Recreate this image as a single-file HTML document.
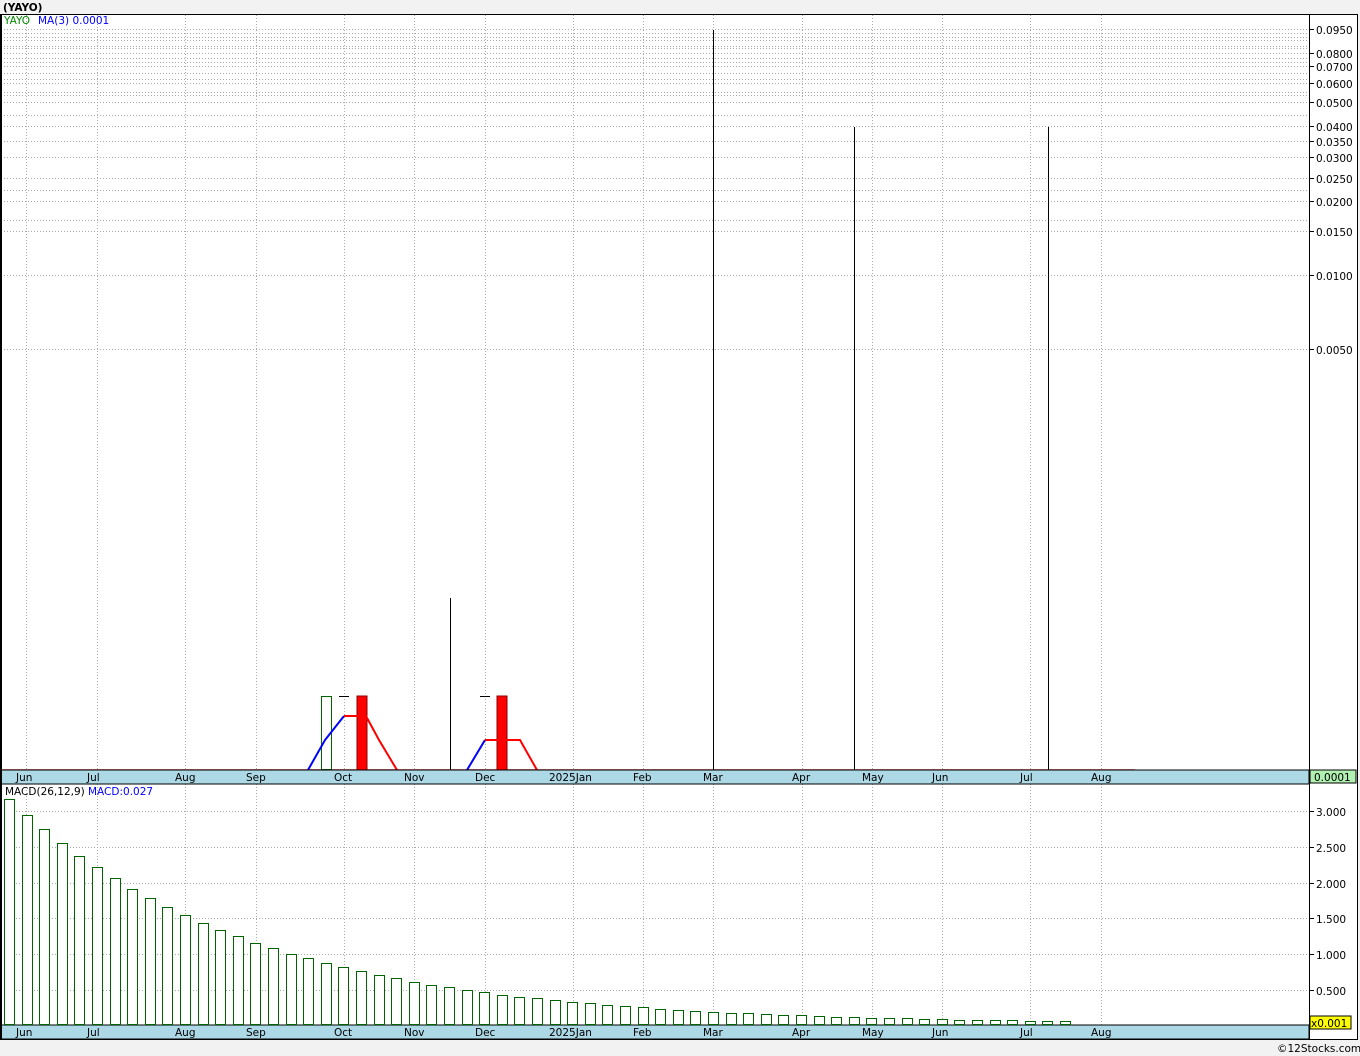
<!DOCTYPE html>
<html><head><meta charset="utf-8"><style>
html,body{margin:0;padding:0;background:#f2f2f2;width:1360px;height:1056px;overflow:hidden}
svg{display:block}
text{font-family:"DejaVu Sans","Liberation Sans",sans-serif;font-size:10.5px}
</style></head><body>
<svg id="s" width="1360" height="1056" xmlns="http://www.w3.org/2000/svg" shape-rendering="crispEdges">
<text x="3" y="11" font-weight="bold" font-size="12" fill="#000">(YAYO)</text>
<rect x="0" y="14" width="1358" height="1026" fill="#fff"/>
<g id="grid" stroke="#aaa" stroke-dasharray="1,2" stroke-width="1"></g>
<line x1="0" y1="769.5" x2="1135" y2="769.5" stroke="#e88" stroke-width="1.5"/>
<g stroke="#000" stroke-width="1">
<line x1="713.5" y1="30" x2="713.5" y2="770"/>
<line x1="854.5" y1="127" x2="854.5" y2="770"/>
<line x1="1048.5" y1="127" x2="1048.5" y2="770"/>
<line x1="450.5" y1="598" x2="450.5" y2="770"/>
<line x1="339" y1="696.5" x2="349" y2="696.5"/>
<line x1="480" y1="696.5" x2="490" y2="696.5"/>
</g>
<rect x="321.5" y="696.5" width="10" height="73" fill="#fff" stroke="#060"/>
<rect x="357" y="696" width="10" height="74" fill="#f00" stroke="#800"/>
<rect x="497" y="696" width="10" height="74" fill="#f00" stroke="#800"/>
<g shape-rendering="auto">
<polyline points="308,770 325,740 344,716" fill="none" stroke="#00f" stroke-width="2"/>
<polyline points="344,716 366,716 379,740 397,770" fill="none" stroke="#f00" stroke-width="2"/>
<polyline points="467,770 485,740" fill="none" stroke="#00f" stroke-width="2"/>
<polyline points="485,740 520,740 537,770" fill="none" stroke="#f00" stroke-width="2"/>
</g>
<text x="4" y="24" font-size="9" fill="#080">YAYO</text>
<text x="38" y="24" font-size="9" fill="#00f">MA(3)  0.0001</text>
<rect x="0" y="770" width="1309" height="14" fill="#add8e6" stroke="#000"/>
<rect x="0" y="1025" width="1309" height="14" fill="#add8e6" stroke="#000"/>
<rect x="1310" y="770" width="46" height="13" fill="#b0f0b0" stroke="#000"/>
<text x="1314" y="781" fill="#000">0.0001</text>
<rect x="1310" y="1016" width="41" height="13" fill="#ff0" stroke="#000"/>
<text x="1311" y="1027" fill="#000">x0.001</text>
<g id="months" fill="#000"></g>
<text x="5" y="795" font-size="9" fill="#000">MACD(26,12,9)</text>
<text x="88" y="795" font-size="9" fill="#00f">MACD:0.027</text>
<g id="bars" fill="#fff" stroke="#006400"></g>
<line x1="1309.5" y1="14" x2="1309.5" y2="1040" stroke="#000"/>
<line x1="1" y1="14" x2="1" y2="1040" stroke="#000" stroke-width="2"/>
<line x1="0" y1="14.5" x2="1358" y2="14.5" stroke="#000"/>
<line x1="1357.5" y1="14" x2="1357.5" y2="1040" stroke="#000"/>
<line x1="0" y1="1039.5" x2="1358" y2="1039.5" stroke="#000"/>
<g id="yax" fill="#000"></g>
<text x="1277" y="1052" font-size="11" fill="#000">©12Stocks.com</text>
</svg>
<script>
var NS="http://www.w3.org/2000/svg";
function el(p,t,a,tx){var e=document.createElementNS(NS,t);for(var k in a)e.setAttribute(k,a[k]);if(tx)e.textContent=tx;document.getElementById(p).appendChild(e);}
var mx=[26,97,185,256,344,414,485,573,643,713,802,872,942,1030,1101];
var mn=["Jun","Jul","Aug","Sep","Oct","Nov","Dec","2025Jan","Feb","Mar","Apr","May","Jun","Jul","Aug"];
mx.forEach(function(x,i){
 el("grid","line",{x1:x+.5,y1:15,x2:x+.5,y2:770});
 el("grid","line",{x1:x+.5,y1:784,x2:x+.5,y2:1025});
 var off=i==7?-24:-10;
 el("months","text",{x:x+off,y:781},mn[i]);
 el("months","text",{x:x+off,y:1036},mn[i]);
});
var py=[[29,"0.0950"],[53,"0.0800"],[66,"0.0700"],[83,"0.0600"],[102,"0.0500"],[126,"0.0400"],[141,"0.0350"],[157,"0.0300"],[178,"0.0250"],[201,"0.0200"],[231,"0.0150"],[275,"0.0100"],[349,"0.0050"]];
[33,37,40,46,48,58,62,73,79,92,95,115,190,220].forEach(function(y){el("grid","line",{x1:1,y1:y+.5,x2:1309,y2:y+.5});});
py.forEach(function(p){var y=p[0];el("grid","line",{x1:1,y1:y+.5,x2:1309,y2:y+.5});el("yax","line",{x1:1309,y1:y+.5,x2:1314,y2:y+.5,stroke:"#000"});el("yax","text",{x:1316,y:y+5},p[1]);});
[[811,"3.000"],[847,"2.500"],[883,"2.000"],[918,"1.500"],[954,"1.000"],[990,"0.500"]].forEach(function(p){var y=p[0];el("grid","line",{x1:1,y1:y+.5,x2:1309,y2:y+.5});el("yax","line",{x1:1309,y1:y+.5,x2:1314,y2:y+.5,stroke:"#000"});el("yax","text",{x:1316,y:y+5},p[1]);});
for(var i=0;i<61;i++){var x=4+i*17.6;var h=225*Math.pow(0.93,i);if(h<1)h=1;el("bars","rect",{x:Math.round(x)+.5,y:Math.round(1024-h)+.5,width:10,height:Math.round(h)});}
</script>
</body></html>
